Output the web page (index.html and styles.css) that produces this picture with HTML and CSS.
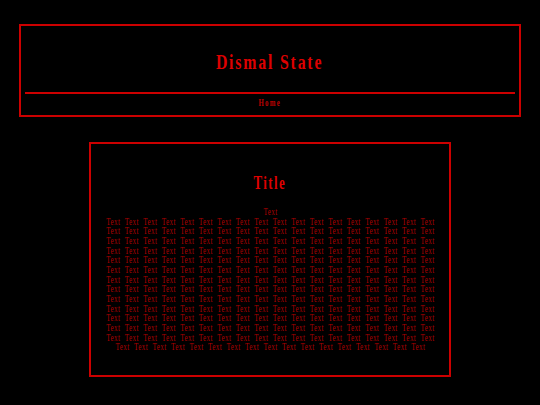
FILE: index.html
```html
<!DOCTYPE html>
<html>
<head>
<meta charset="utf-8">
<title>Dismal State</title>
<link rel="stylesheet" href="styles.css">
</head>
<body>
<header class="site-header">
  <h1 class="site-title"><span class="squeeze">Dismal State</span></h1>
  <hr class="divider">
  <nav class="nav"><a class="nav-link squeeze" href="#">Home</a></nav>
</header>
<main class="panel">
  <h2 class="panel-title"><span class="squeeze">Title</span></h2>
  <div class="panel-text">
    <div class="text-block">
      <p class="panel-sub">Text</p>
      <p class="panel-body">
Text Text Text Text Text Text Text Text Text Text Text Text Text Text Text Text Text Text
Text Text Text Text Text Text Text Text Text Text Text Text Text Text Text Text Text Text
Text Text Text Text Text Text Text Text Text Text Text Text Text Text Text Text Text Text
Text Text Text Text Text Text Text Text Text Text Text Text Text Text Text Text Text Text
Text Text Text Text Text Text Text Text Text Text Text Text Text Text Text Text Text Text
Text Text Text Text Text Text Text Text Text Text Text Text Text Text Text Text Text Text
Text Text Text Text Text Text Text Text Text Text Text Text Text Text Text Text Text Text
Text Text Text Text Text Text Text Text Text Text Text Text Text Text Text Text Text Text
Text Text Text Text Text Text Text Text Text Text Text Text Text Text Text Text Text Text
Text Text Text Text Text Text Text Text Text Text Text Text Text Text Text Text Text Text
Text Text Text Text Text Text Text Text Text Text Text Text Text Text Text Text Text Text
Text Text Text Text Text Text Text Text Text Text Text Text Text Text Text Text Text Text
Text Text Text Text Text Text Text Text Text Text Text Text Text Text Text Text Text Text
Text Text Text Text Text Text Text Text Text Text Text Text Text Text Text Text Text
      </p>
    </div>
  </div>
</main>
</body>
</html>
```
FILE: styles.css
```css
html, body {
  background: #000;
}
body {
  margin: 0;
  padding: 24px 19px 0;
  font-family: "Liberation Serif", "Times New Roman", serif;
  color: #c00;
}
.squeeze {
  display: inline-block;
  transform: scaleX(0.72);
  transform-origin: center center;
}
.site-header {
  border: 2px solid #c00;
  padding: 24px 4px 6px;
}
.site-title {
  margin: 0;
  text-align: center;
  font-size: 22px;
  line-height: 24px;
  letter-spacing: 2.5px;
  font-weight: bold;
  color: #d00;
}
.divider {
  margin: 18px 0 0;
  border: 0;
  border-top: 2px solid #c00;
  height: 0;
}
.nav {
  text-align: center;
  padding-top: 3px;
  font-size: 9.5px;
  line-height: 12px;
  letter-spacing: 1.8px;
}
.nav-link {
  color: #b00;
  text-decoration: none;
  font-weight: bold;
}
.panel {
  width: 358px;
  margin: 25px auto 0;
  border: 2px solid #c00;
  padding: 29px 0 22px;
  text-align: center;
}
.panel-title {
  margin: 0;
  font-size: 18px;
  line-height: 20px;
  letter-spacing: 2px;
  font-weight: bold;
  color: #d00;
}
.panel-text {
  display: flex;
  justify-content: center;
  margin-top: 15px;
}
.text-block {
  flex: none;
  width: 445px;
  transform: scaleX(0.75);
  transform-origin: center top;
  text-align: center;
}
.panel-sub,
.panel-body {
  margin: 0;
  font-size: 9.5px;
  line-height: 9.65px;
  letter-spacing: 0.5px;
  word-spacing: 3.2px;
  color: #a00;
}
```
